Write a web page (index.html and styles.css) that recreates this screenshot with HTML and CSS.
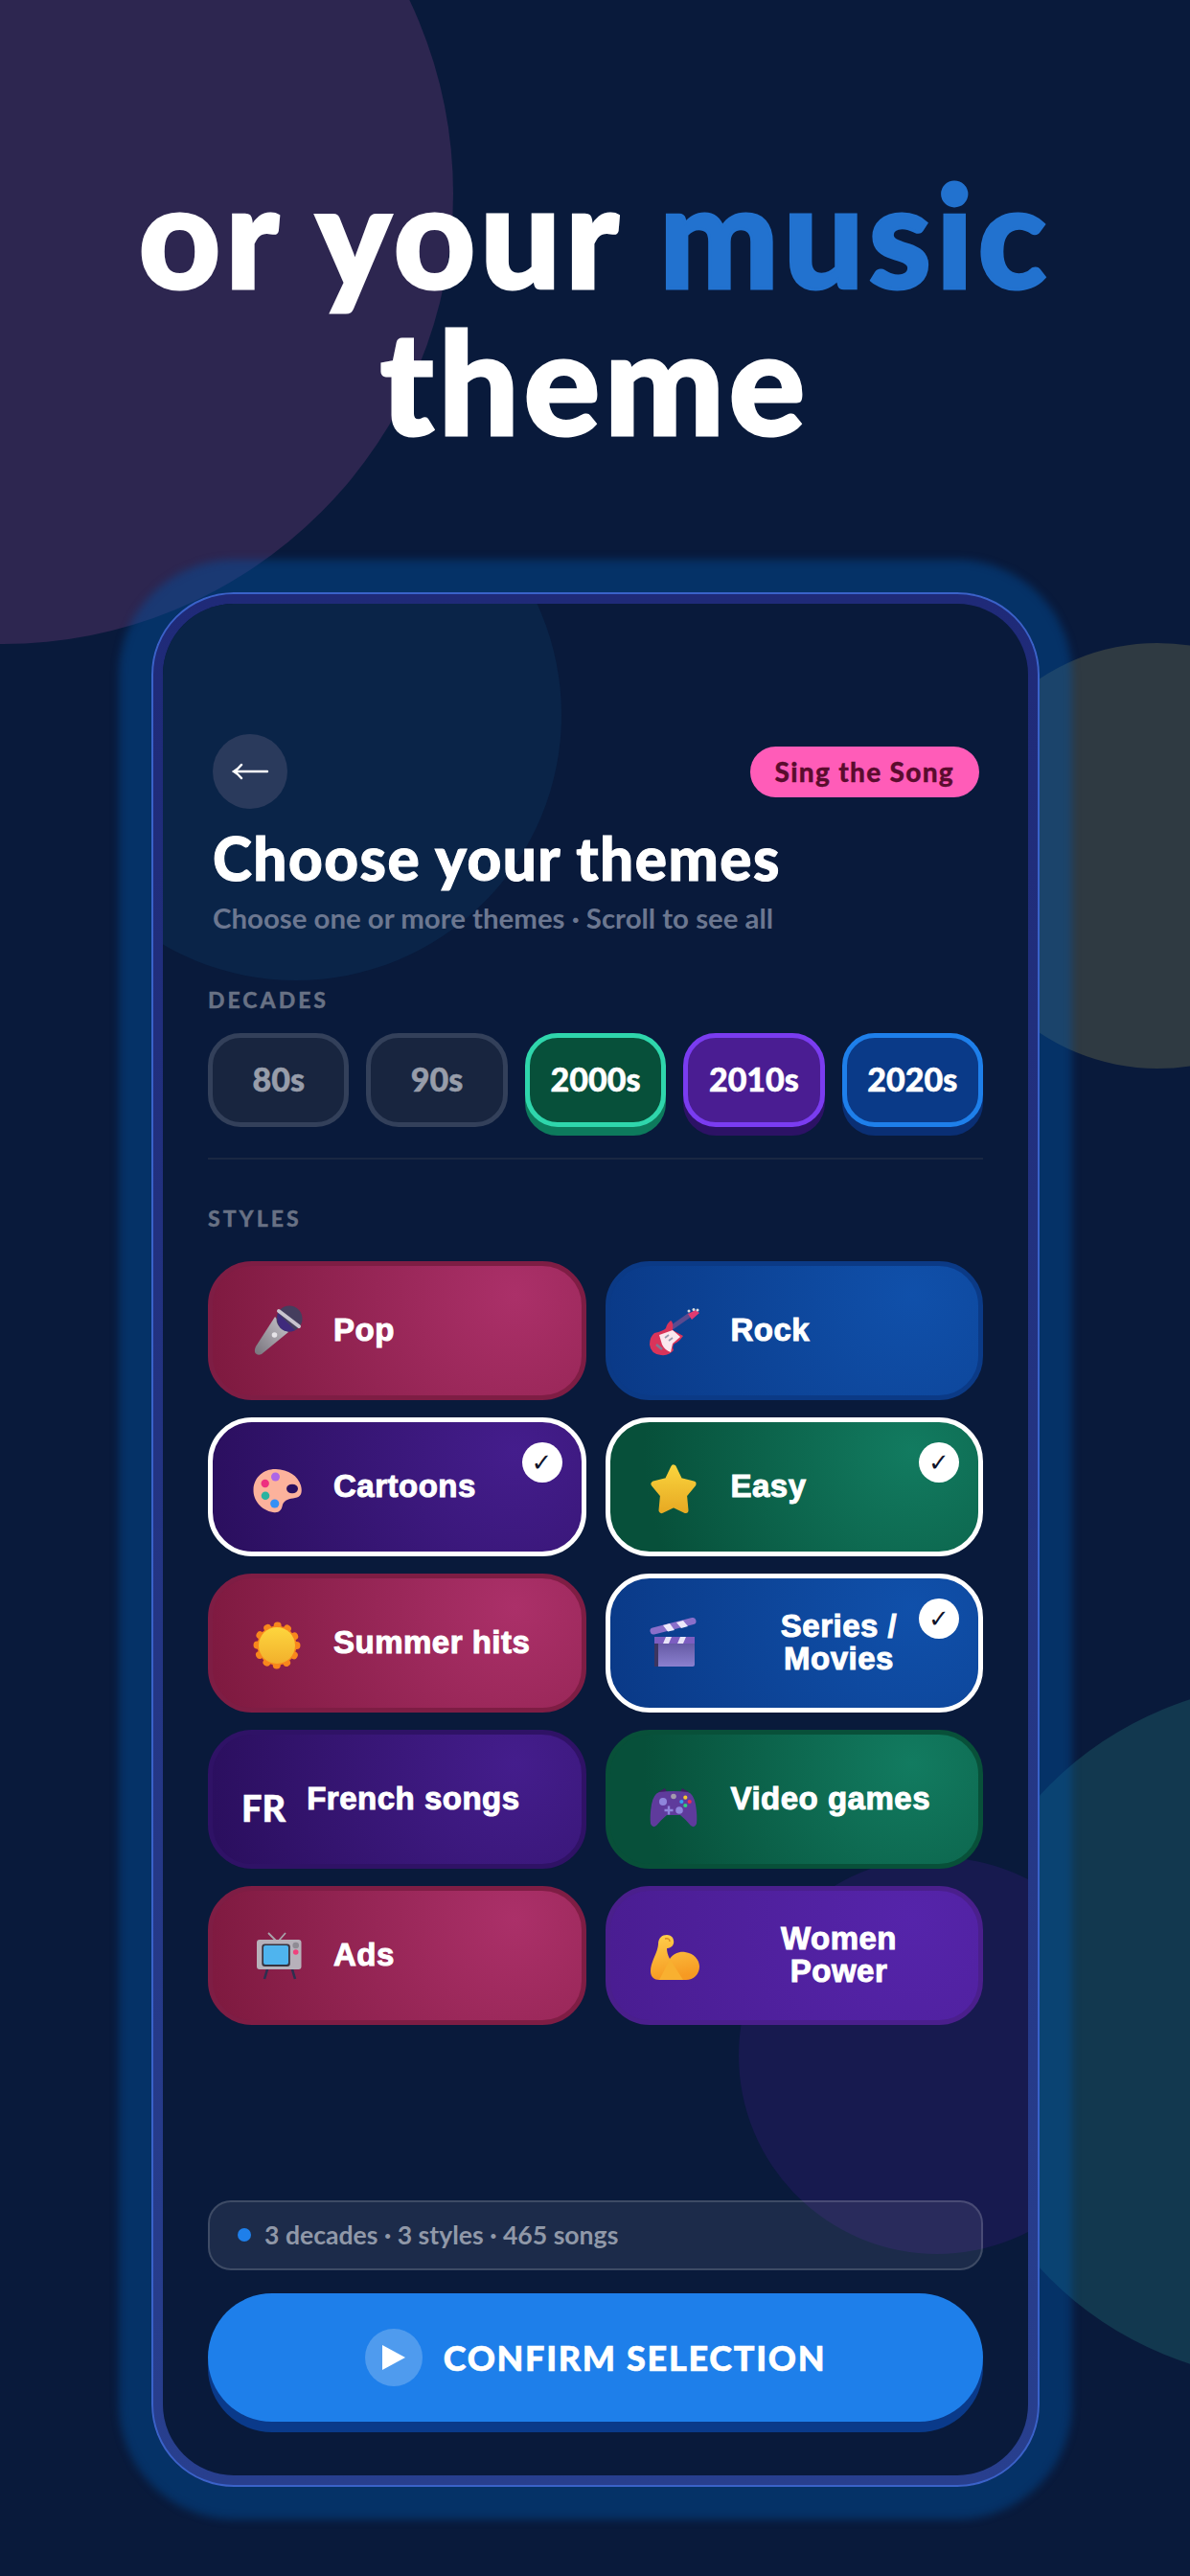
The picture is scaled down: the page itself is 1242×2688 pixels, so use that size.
FILE: index.html
```html
<!DOCTYPE html>
<html>

<head>
    <title>Choose your themes</title>
    <meta charset="utf-8">
    <link rel="stylesheet" href="styles.css">
</head>

<body>
    <div class="blob blob-pink"></div>
    <div class="blob blob-olive"></div>
    <div class="blob blob-teal"></div>

    <h1 class="headline">or your <span class="headline-blue">music</span><br>theme</h1>

    <div class="phone">
        <div class="screen">
            <div class="blob blob-blue"></div>
            <div class="blob blob-violet"></div>

            <div class="top-row">
                <div class="back">
                    <svg width="40" height="20" viewBox="0 0 40 20"><path d="M3 10H38M11 3Q8 7 3 10Q8 13 11 17" fill="none" stroke="#fff" stroke-width="2.4" stroke-linecap="round"/></svg>
                </div>
                <div class="mode">Sing the Song</div>
            </div>
            <h2 class="title">Choose your themes</h2>
            <p class="sub">Choose one or more themes · Scroll to see all</p>

            <div class="section-label decades-label">DECADES</div>
            <div class="decades">
                <div class="chip">80s</div>
                <div class="chip">90s</div>
                <div class="chip chip-green">2000s</div>
                <div class="chip chip-purple">2010s</div>
                <div class="chip chip-blue">2020s</div>
            </div>
            <div class="divider"></div>

            <div class="section-label styles-label">STYLES</div>
            <div class="tiles">
                <div class="tile pink">
                    <svg class="emoji" viewBox="0 0 70 70">
                        <defs>
                            <linearGradient id="micBody" x1="0" y1="1" x2="1" y2="0"><stop offset="0" stop-color="#77737c"/><stop offset="1" stop-color="#c9c6cc"/></linearGradient>
                        </defs>
                        <path d="M31 21L45 37L17 60Q13 62 10.500 59Q9 56 11 52Z" fill="url(#micBody)"/>
                        <circle cx="30.500" cy="40" r="2.800" fill="#e6e4e8"/>
                        <circle cx="46" cy="23" r="13.500" fill="#453e5e"/>
                        <path d="M34 17L52 35Q44 39 37 33Q32 27 34 17Z" fill="#3f2a7c"/>
                        <path d="M35 15L56 31" stroke="#c9c5cf" stroke-width="4" stroke-linecap="round"/>
                    </svg>
                    <span class="label">Pop</span>
                </div>
                <div class="tile blue">
                    <svg class="emoji" viewBox="0 0 70 70">
                        <path d="M32 33L52 19" stroke="#5b4a8f" stroke-width="5"/>
                        <path d="M50 18L58 14L62 17L54 24Z" fill="#e03a70"/>
                        <circle cx="51" cy="15" r="1.500" fill="#ddd"/><circle cx="56" cy="13.500" r="1.500" fill="#ddd"/><circle cx="60" cy="14" r="1.500" fill="#ddd"/>
                        <path d="M32 25Q35 26 34 35L45 41Q41 47 36 49Q33 52 35 56Q30 62 22 61Q11 60 10 50Q10 42 15 38Q24 36 27 33Q28 28 32 25Z" fill="#d9345a"/>
                        <path d="M20 40L34 35L42 42L34 49L32 58Q26 56 23 50Z" fill="#fbe8ee"/>
                        <path d="M17 50L23 55" stroke="#7c7a95" stroke-width="2.500"/>
                        <path d="M26 43L30 40M30 46L34 43" stroke="#9a9ab0" stroke-width="1.800"/>
                    </svg>
                    <span class="label">Rock</span>
                </div>
                <div class="tile purple picked">
                    <svg class="emoji emoji-low" viewBox="0 0 70 70">
                        <path d="M8.500 34C9 21 20 12.500 32 13C45 13.500 55 20 58 30C60 38 58 42 52 43C46 44 41 45 39 50C38 56 35 59 29 58C17 56 8 46 8.500 34Z" fill="#fcb29c"/>
                        <ellipse cx="49" cy="33.500" rx="6" ry="4.800" fill="#2a1060"/>
                        <circle cx="31.500" cy="21" r="4.500" fill="#ad66e6"/>
                        <circle cx="20.700" cy="28" r="4.200" fill="#ee2f80"/>
                        <circle cx="21" cy="40.700" r="4.300" fill="#2ab3a0"/>
                        <circle cx="30.700" cy="49" r="4.600" fill="#3590f5"/>
                    </svg>
                    <span class="label">Cartoons</span>
                    <span class="tick">✓</span>
                </div>
                <div class="tile green picked">
                    <svg class="emoji emoji-mid" viewBox="0 0 70 70">
                        <defs>
                            <linearGradient id="starFill" x1="0" y1="0" x2="0" y2="1"><stop offset="0" stop-color="#f9d23c"/><stop offset="1" stop-color="#e8ab24"/></linearGradient>
                        </defs>
                        <path d="M35 12.500L41.500 26L55.500 29.500L46 41L47.500 57L35 51L22.500 57L24 41L14.500 29.500L28.500 26Z" fill="url(#starFill)" stroke="url(#starFill)" stroke-width="6" stroke-linejoin="round"/>
                    </svg>
                    <span class="label">Easy</span>
                    <span class="tick">✓</span>
                </div>
                <div class="tile pink">
                    <svg class="emoji emoji-mid" viewBox="0 0 70 70">
                        <defs>
                            <linearGradient id="sunFill" x1="0" y1="0" x2="0" y2="1"><stop offset="0" stop-color="#fdd63e"/><stop offset="1" stop-color="#f2b02c"/></linearGradient>
                        </defs>
                        <circle cx="33" cy="35" r="20.500" fill="#f8871c" stroke="#f8871c" stroke-width="8" stroke-dasharray="0.100 10.630" stroke-linecap="round"/>
                        <circle cx="33" cy="35" r="19" fill="url(#sunFill)"/>
                    </svg>
                    <span class="label">Summer hits</span>
                </div>
                <div class="tile blue picked">
                    <svg class="emoji" viewBox="0 0 70 70">
                        <defs>
                            <linearGradient id="clapBody" x1="0" y1="0" x2="0" y2="1"><stop offset="0" stop-color="#5a4f98"/><stop offset="1" stop-color="#8b80cf"/></linearGradient>
                        </defs>
                        <rect x="15" y="29" width="42" height="31" rx="2" fill="url(#clapBody)"/>
                        <rect x="15" y="29" width="4" height="31" fill="#3c3560"/>
                        <rect x="15" y="29" width="42" height="7" fill="#7c5dc0"/>
                        <path d="M27 29H33L30 36H24ZM42 29H48L45 36H39Z" fill="#e8e4f8"/>
                        <path d="M14 23L55 12.500" stroke="#8a6fca" stroke-width="7" stroke-linecap="round"/>
                        <path d="M24 17L31 15L36 22L29 23.500ZM38 14L45 12L50 18L43 20Z" fill="#ece8fa"/>
                    </svg>
                    <span class="label label-wrap">Series /<br>Movies</span>
                    <span class="tick">✓</span>
                </div>
                <div class="tile purple">
                    <span class="flag">FR</span>
                    <span class="label">French songs</span>
                </div>
                <div class="tile green">
                    <svg class="emoji emoji-game" viewBox="0 0 70 70">
                        <path d="M19 19L26 15L28 19ZM51 19L44 15L42 19Z" fill="#3d1f60"/>
                        <path d="M20 19Q35 17 50 19Q56 21 58 32Q60 44 59 52Q57 57 53 54Q47 47 42 43H28Q23 47 17 54Q13 57 11 52Q10 44 12 32Q14 21 20 19Z" fill="#5f3b9c"/>
                        <circle cx="24" cy="29" r="4" fill="#8f86dc"/>
                        <circle cx="41" cy="38" r="3.800" fill="#8f86dc"/>
                        <circle cx="35" cy="23.500" r="2.800" fill="#a39bad"/>
                        <path d="M30 33.500V42.500M25.500 38H34.500" stroke="#8f86dc" stroke-width="2.400"/>
                        <circle cx="47.300" cy="24.700" r="2.100" fill="#f7c82e"/>
                        <circle cx="43.300" cy="29" r="2.100" fill="#35a0f0"/>
                        <circle cx="51.700" cy="29" r="2.100" fill="#ee3050"/>
                        <circle cx="47.300" cy="33" r="2.100" fill="#30d080"/>
                    </svg>
                    <span class="label">Video games</span>
                </div>
                <div class="tile pink">
                    <svg class="emoji" viewBox="0 0 70 70">
                        <path d="M24 12L32 20M42 12L35 20" stroke="#a8a4ac" stroke-width="1.800"/>
                        <path d="M23 50L20 60M49 50L52 60" stroke="#2c2f50" stroke-width="2.600"/>
                        <rect x="12" y="19" width="46.500" height="31" rx="3" fill="#b7b1ba"/>
                        <rect x="17.300" y="23.500" width="29.500" height="23.500" rx="3" fill="#37323e"/>
                        <rect x="19" y="25" width="26" height="20" rx="2" fill="#4fb4ee"/>
                        <circle cx="52.700" cy="25" r="3.300" fill="#8f8b94"/>
                        <circle cx="52.700" cy="32" r="2.800" fill="#f0407c"/>
                    </svg>
                    <span class="label">Ads</span>
                </div>
                <div class="tile violet">
                    <svg class="emoji" viewBox="0 0 70 70">
                        <defs>
                            <linearGradient id="armFill" x1="0" y1="0" x2="0.200" y2="1"><stop offset="0" stop-color="#ffd04c"/><stop offset="1" stop-color="#f69a22"/></linearGradient>
                        </defs>
                        <path d="M11 52C11 42 18 34 19 24C19 17 23 14 28 14C33 14 36 18 35 23C34 27 30 28 28 28C28 32 29 35 31 39C35 33 42 31 47 32C56 33 62 40 62 47C62 55 56 61 48 61H20C15 61 11 58 11 52Z" fill="url(#armFill)"/>
                        <path d="M31 39Q27 48 20 61H45Q38 50 31 39Z" fill="#f8b030"/>
                        <path d="M26 18Q31 17 31 21" fill="none" stroke="#d98a1e" stroke-width="1.400"/>
                    </svg>
                    <span class="label label-wrap">Women<br>Power</span>
                </div>
            </div>

            <div class="footer">
                <div class="status"><span class="status-dot"></span>3 decades · 3 styles · 465 songs</div>
                <div class="confirm">
                    <span class="play">
                        <svg width="24" height="26" viewBox="0 0 24 26"><path d="M0 0L24 13L0 26Z" fill="#fff"/></svg>
                    </span>
                    <span class="confirm-text">CONFIRM SELECTION</span>
                </div>
            </div>
        </div>
    </div>
</body>

</html>
```

FILE: styles.css
```css
html,
body {
    margin: 0;
    padding: 0;
}

body {
    position: relative;
    width: 1242px;
    height: 2688px;
    overflow: hidden;
    background: #091a3b;
    font-family: Lato, "Noto Sans", sans-serif;
}

/* background circles */

.blob {
    position: absolute;
    border-radius: 50%;
}

.blob-pink {
    left: -467px;
    top: -268px;
    width: 940px;
    height: 940px;
    background: #2d2650;
}

.blob-olive {
    left: 986px;
    top: 671px;
    width: 444px;
    height: 444px;
    background: #2f3a42;
}

.blob-teal {
    left: 989px;
    top: 1756px;
    width: 728px;
    height: 728px;
    background: #12384f;
}

.blob-blue {
    left: -138px;
    top: -161px;
    width: 554px;
    height: 554px;
    background: #0a2448;
}

.blob-violet {
    left: 601px;
    top: 1308px;
    width: 414px;
    height: 414px;
    background: #171a4f;
}

.headline {
    position: relative;
    height: 481px;
    margin: 0;
    padding-top: 168px;
    box-sizing: border-box;
    font-size: 148px;
    line-height: 153px;
    font-weight: 900;
    text-align: center;
    letter-spacing: 5px;
    color: #fff;
    -webkit-text-stroke: 3px #fff;
}

.headline-blue {
    color: #2272cf;
    -webkit-text-stroke: 3px #2272cf;
}

/* phone */

.phone {
    position: relative;
    box-sizing: border-box;
    width: 927px;
    height: 1977px;
    margin: 137px 0 0 158px;
    padding: 10px;
    border: 2px solid #3a62c9;
    border-radius: 86px;
    background: linear-gradient(#1f2a78, #283f8e);
    box-shadow: 0 0 8px 34px rgba(0, 84, 164, 0.42);
}

.screen {
    position: relative;
    box-sizing: border-box;
    display: flex;
    flex-direction: column;
    height: 100%;
    padding: 136px 47px 56px;
    border-radius: 74px;
    overflow: hidden;
    background: #091a3b;
}

.screen > * {
    position: relative;
}

.screen > .blob {
    position: absolute;
}

.top-row {
    display: flex;
    align-items: center;
    justify-content: space-between;
    margin: 0 4px 0 5px;
}

.back {
    display: flex;
    align-items: center;
    justify-content: center;
    width: 78px;
    height: 78px;
    border-radius: 50%;
    background: #2a3a5c;
}

.mode {
    padding: 0 26px;
    line-height: 53px;
    border-radius: 27px;
    background: #ff5cb8;
    color: #5a0c2e;
    font-size: 28px;
    font-weight: 900;
    letter-spacing: 1.300px;
    -webkit-text-stroke: 0.300px #5a0c2e;
}

.title {
    margin: 15px 0 0 5px;
    font-size: 62px;
    line-height: 72px;
    font-weight: 900;
    letter-spacing: 1.500px;
    color: #fff;
    -webkit-text-stroke: 1px #fff;
}

.sub {
    margin: 7px 0 0 5px;
    font-size: 29.400px;
    line-height: 40px;
    font-weight: 700;
    color: #6c7790;
}

.section-label {
    font-size: 23px;
    line-height: 30px;
    font-weight: 900;
    letter-spacing: 3px;
    color: #687184;
    -webkit-text-stroke: 0.300px #687184;
}

.decades-label {
    margin-top: 50px;
}

.decades {
    display: grid;
    grid-template-columns: repeat(5, 1fr);
    gap: 18px;
    margin-top: 20px;
}

.chip {
    display: flex;
    align-items: center;
    justify-content: center;
    box-sizing: border-box;
    height: 98px;
    padding-bottom: 3px;
    border: 5px solid #33405a;
    border-radius: 34px;
    background: #18253f;
    color: #979daa;
    font-size: 34px;
    font-weight: 900;
    -webkit-text-stroke: 0.500px;
}

.chip-green {
    border-color: #2fd6ac;
    background: #07503a;
    color: #fff;
    box-shadow: 0 9px 0 #0d7a5c;
}

.chip-purple {
    border-color: #7a3cf0;
    background: #4a1d92;
    color: #fff;
    box-shadow: 0 9px 0 #2c1265;
}

.chip-blue {
    border-color: #1e7fea;
    background: #0a3a88;
    color: #fff;
    box-shadow: 0 9px 0 #0a2f74;
}

.divider {
    height: 2px;
    margin-top: 32px;
    background: #1a2742;
}

.styles-label {
    margin-top: 46px;
}

/* style tiles */

.tiles {
    display: grid;
    grid-template-columns: repeat(2, 1fr);
    grid-auto-rows: 144.500px;
    gap: 18.500px 20px;
    margin-top: 30px;
}

.tile {
    position: relative;
    display: flex;
    align-items: center;
    box-sizing: border-box;
    padding-left: 34px;
    border: 5px solid;
    border-radius: 46px;
}

.pink {
    border-color: #7e1d44;
    background: radial-gradient(circle at 82% 22%, #ab3069, #7f1a40 320px);
}

.blue {
    border-color: #0b3a86;
    background: radial-gradient(circle at 82% 22%, #1050aa, #0a3a88 320px);
}

.purple {
    border-color: #2f1266;
    background: radial-gradient(circle at 82% 22%, #441d8c, #2b0f5f 320px);
}

.green {
    border-color: #085039;
    background: radial-gradient(circle at 82% 22%, #127b60, #07503a 280px);
}

.violet {
    border-color: #4a1f8c;
    background: radial-gradient(circle at 82% 22%, #5524aa, #4a1d92 320px);
}

.picked {
    border-color: #fff;
}

.emoji {
    flex: none;
    width: 70px;
    height: 70px;
}

.tile:nth-child(even) .emoji {
    margin-left: -3px;
    margin-right: 3px;
}

.emoji-low {
    margin-top: 8px;
}

.emoji-mid {
    margin-top: 5px;
}

.emoji-game {
    margin-top: 18px;
}

.label {
    margin-left: 22px;
    font-family: "Liberation Sans", Arial, sans-serif;
    font-size: 33px;
    line-height: 34px;
    font-weight: 700;
    color: #fff;
    -webkit-text-stroke: 1px #fff;
    letter-spacing: 0.500px;
}

.label-wrap {
    width: 226px;
    text-align: center;
}

.flag {
    flex: none;
    margin: 18px 22px 0 -4px;
    font-size: 38px;
    font-weight: 900;
    color: #fff;
    -webkit-text-stroke: 0.500px #fff;
}

.flag + .label {
    margin-left: 0;
}

.tick {
    position: absolute;
    top: 21px;
    right: 20px;
    width: 42px;
    height: 42px;
    border-radius: 50%;
    background: #fff;
    color: #10132a;
    font-family: "DejaVu Sans", sans-serif;
    font-size: 26px;
    line-height: 42px;
    text-align: center;
}

/* footer */

.footer {
    margin-top: auto;
}

.status {
    display: flex;
    align-items: center;
    box-sizing: border-box;
    height: 73px;
    padding-left: 29px;
    padding-bottom: 2px;
    border: 2px solid rgba(255, 255, 255, 0.15);
    border-radius: 24px;
    background: rgba(255, 255, 255, 0.08);
    color: #9098a8;
    font-size: 26.600px;
    font-weight: 700;
}

.status-dot {
    width: 14px;
    height: 14px;
    margin-right: 14px;
    border-radius: 50%;
    background: #1e7fea;
}

.confirm {
    display: flex;
    align-items: center;
    justify-content: center;
    height: 134px;
    margin-top: 24px;
    border-radius: 67px;
    background: #1e7fea;
    box-shadow: 0 11px 0 #0a3a8a;
}

.play {
    display: flex;
    align-items: center;
    justify-content: center;
    width: 60px;
    height: 60px;
    margin-right: 22px;
    border-radius: 50%;
    background: rgba(255, 255, 255, 0.22);
}

.confirm-text {
    font-size: 36px;
    font-weight: 900;
    letter-spacing: 1.700px;
    color: #fff;
    -webkit-text-stroke: 0.600px #fff;
}
```
